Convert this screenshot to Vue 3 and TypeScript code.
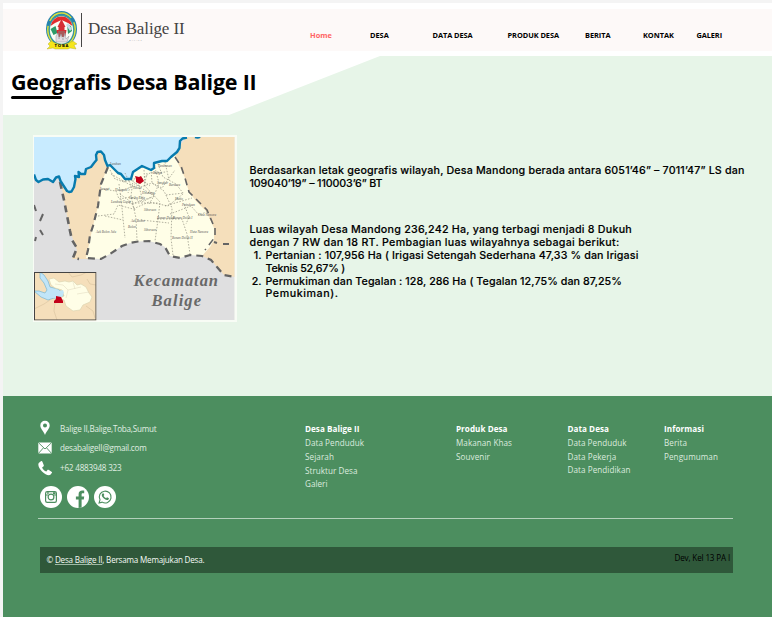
<script setup lang="ts">
import type { Directive } from 'vue'

interface TextItem {
  text: string
  width: number
}
interface FooterColumn {
  title: TextItem
  links: TextItem[]
}

/* Tracks a line of text so that it spans the given measure in pixels. */
const vFit: Directive<HTMLElement, number> = {
  mounted(el, { value }) {
    const natural = el.getBoundingClientRect().width
    const count = (el.textContent ?? '').length
    el.style.letterSpacing = `${(value - natural) / count}px`
  },
}

const nav: TextItem[] = [
  { text: 'Home', width: 21.8 },
  { text: 'DESA', width: 18.8 },
  { text: 'DATA DESA', width: 40 },
  { text: 'PRODUK DESA', width: 51.5 },
  { text: 'BERITA', width: 25.5 },
  { text: 'KONTAK', width: 30.8 },
  { text: 'GALERI', width: 25.5 },
]

const location: TextItem[] = [
  { text: 'Berdasarkan letak geografis wilayah, Desa Mandong berada antara 6051’46” – 7011’47” LS dan', width: 495 },
  { text: '109040’19” – 110003’6” BT', width: 133 },
]
const area: TextItem[] = [
  { text: 'Luas wilayah Desa Mandong 236,242 Ha, yang terbagi menjadi 8 Dukuh', width: 382.5 },
  { text: 'dengan 7 RW dan 18 RT. Pembagian luas wilayahnya sebagai berikut:', width: 370 },
]
const usage: TextItem[][] = [
  [
    { text: 'Pertanian : 107,956 Ha ( Irigasi Setengah Sederhana 47,33 % dan Irigasi', width: 373 },
    { text: 'Teknis 52,67% )', width: 79.5 },
  ],
  [
    { text: 'Permukiman dan Tegalan : 128, 286 Ha ( Tegalan 12,75% dan 87,25%', width: 356.5 },
    { text: 'Pemukiman).', width: 73 },
  ],
]

const columns: FooterColumn[] = [
  {
    title: { text: 'Desa Balige II', width: 54.5 },
    links: [
      { text: 'Data Penduduk', width: 59 },
      { text: 'Sejarah', width: 29 },
      { text: 'Struktur Desa', width: 52.5 },
      { text: 'Galeri', width: 22.5 },
    ],
  },
  {
    title: { text: 'Produk Desa', width: 51.5 },
    links: [
      { text: 'Makanan Khas', width: 56 },
      { text: 'Souvenir', width: 34 },
    ],
  },
  {
    title: { text: 'Data Desa', width: 41.5 },
    links: [
      { text: 'Data Penduduk', width: 59 },
      { text: 'Data Pekerja', width: 48.8 },
      { text: 'Data Pendidikan', width: 63 },
    ],
  },
  {
    title: { text: 'Informasi', width: 40 },
    links: [
      { text: 'Berita', width: 23 },
      { text: 'Pengumuman', width: 54 },
    ],
  },
]

const shore =
  'M34 174.5L36 180 38.5 182 43 179.5 48 179 53 182 56 177.5 59 176.5 60.5 181 67 191 69 192 71.5 191.5 74 187 75.5 179 75 176 79 177 78.500 172 81 174 85 174 86 169 91 167 94 163 96.500 160 96 155 97.500 152 101 151.500 104 155 105 160 107.500 166 110 165 115 170 118 173 121 174 125 179 131 179 133 172 142 166 151 170 154 168 154 163 162 161 167 161 171 157 177 152 179.500 148 180 141 182.500 138.500 187 137.500'

const villages: [number, number, string][] = [
  [110, 165, 'Lumban'], [100, 190, 'Longat'], [115, 191, 'Hutagaol'], [111, 203, 'Lumban Gorat'],
  [129, 199, 'Saribu Raja'], [133, 189, 'Sibola'], [169, 186, 'Baruara'], [142, 194, 'Hinalang'],
  [175, 200, 'Matio'], [182, 206, 'Paindoan'], [144, 211, 'Siboruon'], [198, 216, 'Huta Namora'],
  [131, 222, 'Aek Bolon'], [157, 219, 'Bonan Dolok'], [173, 219, 'Bonan Dolok I'],
  [96, 233, 'Aek Bolon Julu'], [144, 231, 'Siboruon'], [128, 228, 'Bolon'], [190, 233, 'Huta Namora'],
  [172, 239, 'Bonan Dolok II'], [153, 174, 'Balige'], [157, 184, 'Sangkar'], [158, 167, 'Tambunan'],
]
</script>

<template>
  <div class="page">
    <header class="topbar">
      <svg class="crest" viewBox="0 0 34 40" aria-hidden="true">
        <ellipse cx="16.500" cy="19" rx="15.500" ry="18" fill="#2583ae" />
        <ellipse cx="16.500" cy="19.500" rx="13.700" ry="16.500" fill="none" stroke="#d9df3b" stroke-width="1.500" stroke-dasharray="26 5" stroke-dashoffset="6" />
        <ellipse cx="16.500" cy="19.500" rx="12.600" ry="15" fill="#3b9ba0" />
        <ellipse cx="16.500" cy="20" rx="11.600" ry="13.800" fill="#fafcf4" />
        <path d="M5.500 16Q8 6.500 16.500 6.500T27.500 16L23 13 16.500 10 10 13Z" fill="#e22d2d" />
        <path d="M5.500 19l5-3 2 7-4 2zM22 14l4 2 1 5-4 3z" fill="#2d9b69" />
        <path d="M21 15l2-2 4 6-2 2z" fill="#c7dceb" />
        <path d="M16.500 9l4 8h-1v3h2l-1 6h-8l-1-6h2v-3h-1z" fill="#d52f35" />
        <path d="M13 21h7v6h-7z" fill="#a95a58" />
        <path d="M11 26l2-3 1 6 2-5 2 6 2-7 1 6 3-3-2 6H11z" fill="#e4dce1" stroke="#9399a0" stroke-width=".5" />
        <path d="M3 34l3-3 4 2q7 3 14 0l4-2 4 3-3 1 2 4-6-1-2 1H10l-2-1-6 1 3-3z" fill="#f6e51b" stroke="#aaa620" stroke-width=".4" />
        <text x="9.500" y="37.300" font-size="4.200" font-weight="700" textLength="14">TOBA</text>
      </svg>
      <span class="rule"></span>
      <div class="brand">
        <span v-fit="96.500" class="name">Desa Balige II</span>
        <span class="tag">BALIGE</span>
      </div>
      <nav class="nav">
        <a v-for="(item, i) in nav" :key="item.text" :class="{ active: i === 0 }"><span v-fit="item.width" class="fit">{{ item.text }}</span></a>
      </nav>
    </header>

    <section class="hero">
      <h1><span v-fit="245.500" class="fit">Geografis Desa Balige II</span></h1>
      <span class="underline"></span>
    </section>

    <main class="content">
      <svg class="map" viewBox="33 135 204 187" role="img">
        <rect x="33" y="135" width="204" height="187" fill="#f8fcf5" />
        <svg x="34" y="137" width="200.500" height="183" viewBox="34 137 200.500 183">
          <rect x="34" y="137" width="201" height="184" fill="#dfdfe0" />
          <path d="M187 137H235V277L224 275 217 267 211 260 202 256 190 200 170 157Z" fill="#f5dfbb" />
          <path d="M60 177L64 200 70 231 77 250 72 259H90L100 200 110 165 98 148Z" fill="#f5dfbb" />
          <path d="M108 166L101 184 98 206 93 226 91 235 86 258 100 259 110 254 122 246 130 243 138 241.500 149 241 160 244 165 247 170 256 180 258 190 255 202 256 210 247 214 240V228L206 211 196 201 189 192 185 178 175 157 181 140 110 158Z" fill="#fffee7" />
          <path :d="shore + 'L187 136H34Z'" fill="#c8ebff" />
          <g class="borders">
            <path d="M60 182L64 200 70 231 72 240 77 248 73 258 79 259" stroke-width="2.600" />
            <path d="M108 167L101 184 98 206 93 226 90 235 88 250 86 258 101 259 110 254 122 246 130 243 138 241.500 149 241 160 244 165 247 170 256 180 258 190 255 202 256 211 260 217 267 224 275 235 277" stroke-width="2.200" />
            <path d="M175 157L181 166 185 178 189 192 198 201 207 210 213 224M215 228V237L205 250" stroke-width="1.600" />
            <path d="M214 242l3 1m6 1h6M34 205l2 6M43 214l-3 7M40 230l3 5M36 237l-1 4" stroke-width="2" stroke-dasharray="none" />
          </g>
          <g class="lanes">
            <path d="M110 170l5 9 9 3 7-2 10 7 11-4 10 5 13-18M101 189l15 2 3 8 12-2 11 5 12-6 5-13-5-19M98 216l16-2 4-9 15 4 16-7 19 4 15-12M119 184l3 24 3 30M133 180l-2 16 5 22 1 22M144 170l1 16 15 16-2 18-3 21M151 169l1 14 12 8 8 17-1 30 2 17M158 164l5 13 13 7 7 9M105 216l18 4M111 174l21 12 18-13 16-1M122 190l17-5M126 203h33M165 206l27-8M170 214l21-8 8 9 10-4M157 219h25l5 15 3 20M141 220l28 3M166 195l18-2" />
            <path d="M122 181l18-3 10 8M125 173l6 12-3 8M138 182l4 16M147 173l-3 14M165 162l4 18M120 194l11 8 4 8M132 204l20-7M143 189l11 7-5 8M184 204l5 13-3 7" />
          </g>
          <g class="villages">
            <text v-for="([x, y, name], i) in villages" :key="i" :x="x" :y="y">{{ name }}</text>
          </g>
          <path :d="shore" class="shore" />
          <path d="M195 137.200q3 1 5-.400" class="shore" />
          <path d="M135 176l4 1 2-1 3 5-4 3-4-2v-3z" fill="#c3001a" />
          <text class="district" x="133.500" y="286" textLength="84.500">Kecamatan</text>
          <text class="district" x="151.500" y="305.500" textLength="49.500">Balige</text>
        </svg>
        <svg x="34" y="272" width="62.500" height="48.500" viewBox="34 272 62.500 48.500">
          <rect x="34" y="272" width="62.500" height="48.500" fill="#f5dfbb" />
          <path d="M34 309l10-5 6-4M68 272l4 5 9-2 6-3M87 279l3 5 6 1M55 302l-1 9 3 9M86 306l7 5 2 7" fill="none" stroke="#dfc9a4" stroke-width=".800" />
          <path d="M40 272l4 3 4 6 2 6 8 2 6 5-2 5-8-1-6 2-7-3-7-6 5 0 6 2 2-3-3-7-4-5z" fill="#c1e5f8" stroke="#69aed0" stroke-width=".600" />
          <path d="M49 279l5-1 5 4 6-1 4 1 4-1 4 4 4-1 5 3 3 6 3 4-2 5-7 3-3 5-7 1-7-5-2-6-6-1 6-3-2-6-7-2-4-3z" fill="#fffee7" stroke="#dcd6b2" stroke-width=".700" />
          <path d="M55 284l8 1 5 5 13-3M68 290l-2 8M73 282l2 7M77 294l12-2" fill="none" stroke="#ded7bc" stroke-width=".500" />
          <path d="M50 290l5 3 5-2 3-1 1 3-4 4-7 1-5-2z" fill="#c1e5f8" />
          <path d="M56 296l5 1 2 4v2H54v-2l2-2z" fill="#c3001a" />
          <rect x="34.500" y="272.500" width="61.500" height="47.500" fill="none" stroke="#444" stroke-width="1" />
        </svg>
      </svg>

      <div class="copy">
        <p class="para">
          <span v-for="line in location" :key="line.text" class="line"><span v-fit="line.width" class="fit">{{ line.text }}</span></span>
        </p>
        <p class="para">
          <span v-for="line in area" :key="line.text" class="line"><span v-fit="line.width" class="fit">{{ line.text }}</span></span>
        </p>
        <ol class="list">
          <li v-for="(lines, i) in usage" :key="i">
            <span class="num">{{ i + 1 }}.</span>
            <span>
              <span v-for="line in lines" :key="line.text" class="line"><span v-fit="line.width" class="fit">{{ line.text }}</span></span>
            </span>
          </li>
        </ol>
      </div>
    </main>

    <footer class="footer">
      <div class="upper">
        <div class="contact">
          <div class="entry">
            <svg viewBox="0 0 14 16"><path fill-rule="evenodd" d="M7 .8C4.100 .8 2.300 2.900 2.300 5.500 2.300 8.500 5.500 11 7 15 8.500 11 11.700 8.500 11.700 5.500 11.700 2.900 9.900 .8 7 .8ZM7 3.500a2 2 0 1 1 0 4 2 2 0 0 1 0-4Z" /></svg>
            <span v-fit="96.500" class="fit">Balige II,Balige,Toba,Sumut</span>
          </div>
          <div class="entry">
            <svg viewBox="0 0 14 16"><rect x=".3" y="2.500" width="13.400" height="11" rx="1" /><path d="M.8 3l6.200 6 6.200-6M.8 13l4.500-5M13.200 13L8.700 8" fill="none" stroke="#4c8e5f" stroke-width=".9" /></svg>
            <span v-fit="86.500" class="fit">desabaligeII@gmail.com</span>
          </div>
          <div class="entry">
            <svg viewBox="0 0 14 16"><path d="M2.900 1.300 1 2.700C-.7 4.300 1 8.500 4 11.500s6.700 4.500 8.400 3.300l1.400-1.700c.4-.5.2-1-.3-1.400l-2.600-1.600c-.6-.4-1.200-.3-1.600.2l-.9 1.200C6.500 11 4.700 9.200 4.100 7.500l1.200-.9c.5-.4.7-.9.4-1.500L4.400 1.700c-.3-.6-.9-.8-1.500-.4Z" /></svg>
            <span v-fit="61.500" class="fit">+62 4883948 323</span>
          </div>
          <div class="social">
            <svg viewBox="0 0 22 22"><circle cx="11" cy="11" r="11" /><g fill="none" stroke="#4c8e5f"><rect x="5.600" y="5.600" width="10.800" height="10.800" rx="1.600" stroke-width="1.200" /><path d="M5.500 9h3M13.500 9h3" stroke-width="1" /><circle cx="11" cy="11" r="2.900" stroke-width="1.200" /></g><path d="M13 6.300h2.500v2H13zM7 5.700h.7V8H7zM8.400 5.700h.7V8h-.7z" fill="#4c8e5f" /></svg>
            <svg viewBox="0 0 22 22"><circle cx="11" cy="11" r="11" /><path d="M11.600 22v-8.400H8.900v-3h2.700V8.300c0-2.500 1.500-3.700 3.700-3.700h1.900v2.700h-1.300c-1 0-1.300.5-1.300 1.400v1.900h2.600l-.4 3h-2.200v8Z" fill="#4c8e5f" /></svg>
            <svg viewBox="0 0 22 22"><circle cx="11" cy="11" r="11" /><path d="M5.100 17l.9-3.200a5.900 5.900 0 1 1 2.200 2.300Z" fill="none" stroke="#4c8e5f" stroke-width="1.100" /><path d="M8.700 7.500c.5-.4.9-.2 1.100.3l.5 1.200-.7 1c.6 1.100 1.400 1.800 2.500 2.300l.9-1 1.600.8c.5.300.3 1-.1 1.500-1 .9-2.500.5-3.900-.5S8 10.800 7.800 9.600c-.1-.9.300-1.700.9-2.100Z" fill="#4c8e5f" /></svg>
          </div>
        </div>
        <div v-for="(column, i) in columns" :key="i" class="column" :class="{ compact: i === 2 }">
          <strong><span v-fit="column.title.width" class="fit">{{ column.title.text }}</span></strong>
          <a v-for="link in column.links" :key="link.text"><span v-fit="link.width" class="fit">{{ link.text }}</span></a>
        </div>
      </div>
      <div class="bottom">
        <span v-fit="158" class="fit">© <span class="site">Desa Balige II</span>, Bersama Memajukan Desa.</span>
        <span class="dev"><span v-fit="55.500" class="fit">Dev, Kel 13 PA I</span></span>
      </div>
    </footer>
  </div>
</template>

<style>
body {
  margin: 0;
  background: #f4f4f4;
}
</style>

<style scoped>
.page {
  box-sizing: border-box;
  width: 772px;
  height: 617px;
  padding: 3px 0 0 3px;
  display: flex;
  flex-direction: column;
  overflow: hidden;
  background: #f4f4f4;
  font-family: "Open Sans", "Noto Sans", sans-serif;
  color: #000;
}
.fit {
  display: inline-block;
  white-space: pre;
}
.topbar {
  box-sizing: border-box;
  flex: none;
  height: 53px;
  display: flex;
  align-items: flex-start;
  border-top: 6px solid #fff;
  border-bottom: 5px solid #fff;
  background: #fdf9f8;
}
.crest {
  width: 34px;
  height: 40px;
  margin: .5px 0 0 42px;
}
.rule {
  width: 1.500px;
  height: 34px;
  margin: 4px 0 0 1.500px;
  background: #474545;
}
.brand {
  display: flex;
  flex-direction: column;
  align-items: flex-start;
  width: 105px;
  margin: 10px 0 0 6px;
}
.name {
  display: inline-block;
  white-space: pre;
  font: 17px/20px "Liberation Serif", serif;
  color: #454343;
}
.tag {
  align-self: center;
  margin-right: 9px;
  font-size: 2.200px;
  line-height: 3px;
  letter-spacing: 1px;
  color: #aaa;
}
.nav {
  display: grid;
  grid-template-columns: 60px 62.500px 75px 77.500px 58px 53.500px auto;
  margin: 21px 0 0 117px;
  font-size: 7.400px;
  font-weight: 700;
  line-height: 11px;
}
.nav a {
  display: flex;
}
.nav .active {
  color: #ff6464;
}
.hero {
  flex: none;
  height: 59px;
  background: #fff;
  position: relative;
  isolation: isolate;
}
.hero::before {
  content: "";
  position: absolute;
  inset: 0;
  z-index: -1;
  background: #e7f5e8;
  clip-path: polygon(377px 0, 100% 0, 100% 100%, 226px 100%);
}
h1 {
  margin: 0;
  padding: 11px 0 0 8px;
  display: flex;
  font-size: 21.500px;
  line-height: 30px;
  font-weight: 700;
}
.underline {
  display: block;
  width: 51px;
  height: 3px;
  margin: -.700px 0 0 8px;
  border-radius: 2px;
  background: #000;
}
.content {
  flex: none;
  box-sizing: border-box;
  height: 281px;
  padding: 20px 0 0 30px;
  display: flex;
  align-items: flex-start;
  background: #e7f5e8;
}
.map {
  flex: none;
  width: 204px;
  height: 187px;
}
.borders {
  fill: none;
  stroke: #646464;
  stroke-dasharray: 7 5;
}
.lanes {
  fill: none;
  stroke: #8f8e80;
  stroke-width: .7;
  stroke-dasharray: 1.500 1.500;
}
.villages {
  font: italic 3.300px "Liberation Serif", serif;
  fill: #555;
}
.shore {
  fill: none;
  stroke: #077bae;
  stroke-width: 2.400;
  stroke-linejoin: round;
}
.district {
  font: italic 700 16.500px "Liberation Serif", serif;
  fill: #686868;
}
.copy {
  padding: 29.900px 0 0 12.500px;
  font-family: "Inter", sans-serif;
  font-size: 10.700px;
  font-weight: 500;
  line-height: 12.800px;
  color: #000;
  -webkit-text-stroke: .15px #000;
}
.line {
  display: flex;
}
.para {
  margin: 0;
}
.para + .para {
  margin-top: 34px;
}
.list {
  margin: 0;
  padding: 0;
  list-style: none;
}
.list li {
  display: grid;
  grid-template-columns: 16px auto;
}
.num {
  padding-right: 4px;
  text-align: right;
}
.footer {
  flex: 1;
  box-sizing: border-box;
  padding: 23px 39px 0 35px;
  background: #4c8e5f;
  color: #f4faf5;
  font-size: 8.100px;
  font-weight: 400;
}
.upper {
  box-sizing: border-box;
  height: 100px;
  display: grid;
  grid-template-columns: 267px 151px 111.500px 96.500px auto;
  border-bottom: 1px solid #b3d0bb;
}
.contact {
  margin-top: -.700px;
  color: #e0eee3;
}
.entry {
  display: flex;
  align-items: center;
  gap: 8px;
  height: 19.700px;
}
.entry svg {
  width: 14px;
  height: 16px;
  fill: #fff;
}
.social {
  display: flex;
  gap: 5px;
  margin: 8.500px 0 0 1.500px;
}
.social svg {
  width: 22px;
  height: 22px;
  fill: #fff;
}
.column {
  padding-top: 3px;
  display: flex;
  flex-direction: column;
  line-height: 14px;
  font-weight: 400;
  color: #dcebdf;
}
.column strong {
  font-weight: 700;
  color: #fff;
  display: flex;
}
.column a {
  display: flex;
}
.column a:nth-child(5),
.compact a:nth-child(4) {
  margin-top: -1.200px;
}
.bottom {
  box-sizing: border-box;
  height: 26.500px;
  margin: 27.500px 0 0 2px;
  padding: 0 3px 0 6.500px;
  display: flex;
  align-items: center;
  justify-content: space-between;
  background: #2f583a;
}
.site {
  text-decoration: underline;
  text-decoration-thickness: .5px;
  text-decoration-color: #9fb9a5;
}
.dev {
  color: #000;
  padding-bottom: 5px;
}
</style>
